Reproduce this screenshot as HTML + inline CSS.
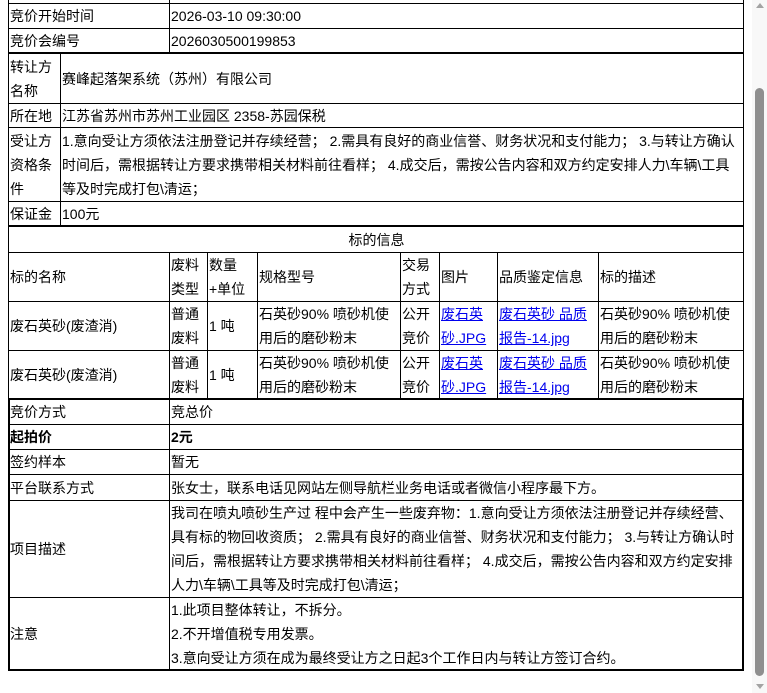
<!DOCTYPE html>
<html><head><meta charset="utf-8"><style>
html,body{margin:0;padding:0;background:#fff;width:767px;height:693px;overflow:hidden}
body{font-family:"Liberation Sans","Noto Sans CJK SC",sans-serif;font-size:14px;color:#000;position:relative}
.c{position:absolute;border:1px solid #000;box-sizing:border-box;display:flex;align-items:center;padding-left:1px;line-height:24px;white-space:nowrap;overflow:hidden}
.ctr{justify-content:center}
.h{position:absolute;background:#000}
a{color:#0000ee;text-decoration:underline}
b{font-weight:bold}
</style></head><body>
<div class="c" style="left:8px;top:-20px;width:162px;height:24px"></div>
<div class="c" style="left:169px;top:-20px;width:575px;height:24px"></div>
<div class="c" style="left:8px;top:3px;width:162px;height:26px">竞价开始时间</div>
<div class="c" style="left:169px;top:3px;width:575px;height:26px">2026-03-10 09:30:00</div>
<div class="c" style="left:8px;top:28px;width:162px;height:26px">竞价会编号</div>
<div class="c" style="left:169px;top:28px;width:575px;height:26px">2026030500199853</div>
<div class="h" style="left:8px;top:52px;width:736px;height:2px"></div>
<div class="c" style="left:8px;top:53px;width:53px;height:51px">转让方<br>名称</div>
<div class="c" style="left:60px;top:53px;width:684px;height:51px">赛峰起落架系统（苏州）有限公司</div>
<div class="c" style="left:8px;top:103px;width:53px;height:25px">所在地</div>
<div class="c" style="left:60px;top:103px;width:684px;height:25px">江苏省苏州市苏州工业园区 2358-苏园保税</div>
<div class="c" style="left:8px;top:127px;width:53px;height:75px">受让方<br>资格条<br>件</div>
<div class="c" style="left:60px;top:127px;width:684px;height:75px">1.意向受让方须依法注册登记并存续经营； 2.需具有良好的商业信誉、财务状况和支付能力； 3.与转让方确认<br>时间后，需根据转让方要求携带相关材料前往看样； 4.成交后，需按公告内容和双方约定安排人力\车辆\工具<br>等及时完成打包\清运；</div>
<div class="c" style="left:8px;top:201px;width:53px;height:26px">保证金</div>
<div class="c" style="left:60px;top:201px;width:684px;height:26px">100元</div>
<div class="h" style="left:8px;top:225px;width:736px;height:2px"></div>
<div class="c ctr" style="left:8px;top:226px;width:736px;height:27px">标的信息</div>
<div class="c" style="left:8px;top:252px;width:162px;height:50px">标的名称</div>
<div class="c" style="left:169px;top:252px;width:39px;height:50px">废料<br>类型</div>
<div class="c" style="left:207px;top:252px;width:51px;height:50px">数量<br>+单位</div>
<div class="c" style="left:257px;top:252px;width:144px;height:50px">规格型号</div>
<div class="c" style="left:400px;top:252px;width:40px;height:50px">交易<br>方式</div>
<div class="c" style="left:439px;top:252px;width:59px;height:50px">图片</div>
<div class="c" style="left:497px;top:252px;width:102px;height:50px">品质鉴定信息</div>
<div class="c" style="left:598px;top:252px;width:146px;height:50px">标的描述</div>
<div class="c" style="left:8px;top:301px;width:162px;height:50px">废石英砂(废渣消)</div>
<div class="c" style="left:169px;top:301px;width:39px;height:50px">普通<br>废料</div>
<div class="c" style="left:207px;top:301px;width:51px;height:50px">1 吨</div>
<div class="c" style="left:257px;top:301px;width:144px;height:50px">石英砂90% 喷砂机使<br>用后的磨砂粉末</div>
<div class="c" style="left:400px;top:301px;width:40px;height:50px">公开<br>竞价</div>
<div class="c" style="left:439px;top:301px;width:59px;height:50px"><a>废石英<br>砂.JPG</a></div>
<div class="c" style="left:497px;top:301px;width:102px;height:50px"><a>废石英砂 品质<br>报告-14.jpg</a></div>
<div class="c" style="left:598px;top:301px;width:146px;height:50px">石英砂90% 喷砂机使<br>用后的磨砂粉末</div>
<div class="c" style="left:8px;top:350px;width:162px;height:50px">废石英砂(废渣消)</div>
<div class="c" style="left:169px;top:350px;width:39px;height:50px">普通<br>废料</div>
<div class="c" style="left:207px;top:350px;width:51px;height:50px">1 吨</div>
<div class="c" style="left:257px;top:350px;width:144px;height:50px">石英砂90% 喷砂机使<br>用后的磨砂粉末</div>
<div class="c" style="left:400px;top:350px;width:40px;height:50px">公开<br>竞价</div>
<div class="c" style="left:439px;top:350px;width:59px;height:50px"><a>废石英<br>砂.JPG</a></div>
<div class="c" style="left:497px;top:350px;width:102px;height:50px"><a>废石英砂 品质<br>报告-14.jpg</a></div>
<div class="c" style="left:598px;top:350px;width:146px;height:50px">石英砂90% 喷砂机使<br>用后的磨砂粉末</div>
<div class="h" style="left:8px;top:398px;width:736px;height:2px"></div>
<div class="c" style="left:8px;top:399px;width:162px;height:26px">竞价方式</div>
<div class="c" style="left:169px;top:399px;width:575px;height:26px">竞总价</div>
<div class="c" style="left:8px;top:424px;width:162px;height:26px"><b>起拍价</b></div>
<div class="c" style="left:169px;top:424px;width:575px;height:26px"><b>2元</b></div>
<div class="c" style="left:8px;top:449px;width:162px;height:26px">签约样本</div>
<div class="c" style="left:169px;top:449px;width:575px;height:26px">暂无</div>
<div class="c" style="left:8px;top:474px;width:162px;height:27px">平台联系方式</div>
<div class="c" style="left:169px;top:474px;width:575px;height:27px">张女士，联系电话见网站左侧导航栏业务电话或者微信小程序最下方。</div>
<div class="c" style="left:8px;top:500px;width:162px;height:98px">项目描述</div>
<div class="c" style="left:169px;top:500px;width:575px;height:98px">我司在喷丸喷砂生产过 程中会产生一些废弃物：1.意向受让方须依法注册登记并存续经营、<br>具有标的物回收资质； 2.需具有良好的商业信誉、财务状况和支付能力； 3.与转让方确认时<br>间后，需根据转让方要求携带相关材料前往看样； 4.成交后，需按公告内容和双方约定安排<br>人力\车辆\工具等及时完成打包\清运；</div>
<div class="c" style="left:8px;top:597px;width:162px;height:74px">注意</div>
<div class="c" style="left:169px;top:597px;width:575px;height:74px">1.此项目整体转让，不拆分。<br>2.不开增值税专用发票。<br>3.意向受让方须在成为最终受让方之日起3个工作日内与转让方签订合约。</div>
<div class="h" style="left:8px;top:399px;width:2px;height:272px"></div>
<div class="h" style="left:742px;top:399px;width:2px;height:272px"></div>
<div class="h" style="left:8px;top:669px;width:736px;height:2px"></div>
<div style="position:absolute;left:752px;top:0;width:15px;height:693px;background:#f8f8f8"></div>
<div style="position:absolute;left:755px;top:88px;width:9px;height:588px;background:#8f8f8f;border-radius:5px"></div>
<div style="position:absolute;left:756px;top:3px;width:0;height:0;border-left:4px solid transparent;border-right:4px solid transparent;border-bottom:5px solid #a3a3a3"></div>
<div style="position:absolute;left:756px;top:684px;width:0;height:0;border-left:4px solid transparent;border-right:4px solid transparent;border-top:5px solid #a3a3a3"></div>
</body></html>
